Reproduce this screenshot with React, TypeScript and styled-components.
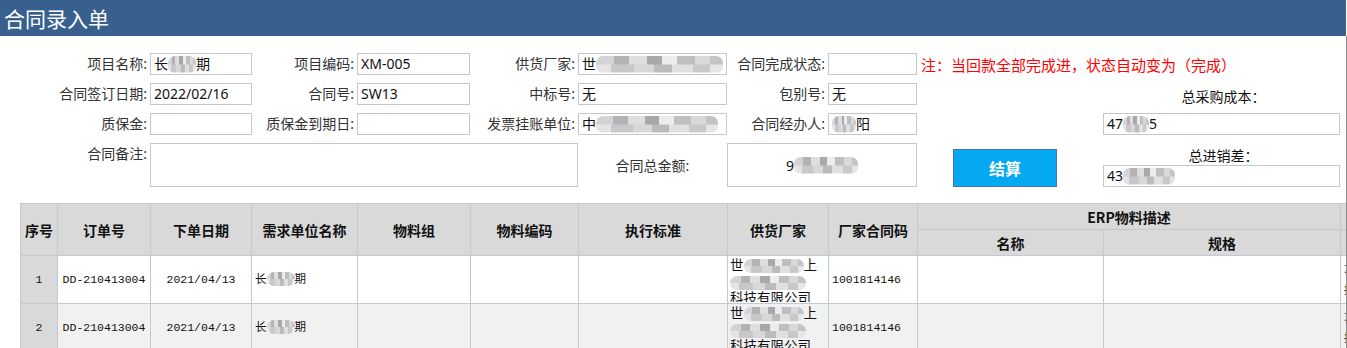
import * as React from 'react'
import styled, { createGlobalStyle } from 'styled-components'

const GlobalStyle = createGlobalStyle`
  html, body {
    margin: 0;
    padding: 0;
    background: #ffffff;
  }
  body {
    font-family: "Noto Sans", "Noto Sans CJK SC", sans-serif;
  }
`

type Row = {
  no: number
  order: string
  date: string
}

const rows: Row[] = [
  { no: 1, order: 'DD-210413004', date: '2021/04/13' },
  { no: 2, order: 'DD-210413004', date: '2021/04/13' },
]

const colWidths = [37, 93, 101, 106, 113, 108, 149, 101, 89, 186, 237, 120, 120]

export default function App() {
  return (
    <Shell>
      <GlobalStyle />
      <TitleBar>
        <Title>合同录入单</Title>
      </TitleBar>
      <Body>
        <FormGrid>
          <Label>项目名称:</Label>
          <Field>
            长<Mosaic $w={28} />期
          </Field>
          <Label>项目编码:</Label>
          <Field>XM-005</Field>
          <Label>供货厂家:</Label>
          <Field>
            世<Mosaic $w={128} />
          </Field>
          <Label>合同完成状态:</Label>
          <Field />
          <Note>注：当回款全部完成进，状态自动变为（完成）</Note>

          <Label>合同签订日期:</Label>
          <Field>2022/02/16</Field>
          <Label>合同号:</Label>
          <Field>SW13</Field>
          <Label>中标号:</Label>
          <Field>无</Field>
          <Label>包别号:</Label>
          <Field>无</Field>
          <Spacer />
          <SideLabel>总采购成本：</SideLabel>

          <Label>质保金:</Label>
          <Field />
          <Label>质保金到期日:</Label>
          <Field />
          <Label>发票挂账单位:</Label>
          <Field>
            中<Mosaic $w={122} />
          </Field>
          <Label>合同经办人:</Label>
          <Field>
            <Mosaic $w={24} />阳
          </Field>
          <Spacer />
          <Field>
            47<Mosaic $w={26} />5
          </Field>

          <Label>合同备注:</Label>
          <Memo />
          <CenterLabel>合同总金额:</CenterLabel>
          <AmountBox>
            9<Mosaic $w={64} />
          </AmountBox>
          <ButtonCell>
            <SettleButton>结算</SettleButton>
          </ButtonCell>
          <SideStack>
            <SideLabel>总进销差：</SideLabel>
            <Field>
              43<Mosaic $w={52} />
            </Field>
          </SideStack>
        </FormGrid>

        <TableWrap>
          <Table>
            <colgroup>
              {colWidths.map((w, i) => (
                <col key={i} style={{ width: w }} />
              ))}
            </colgroup>
            <thead>
              <tr>
                <Th rowSpan={2}>序号</Th>
                <Th rowSpan={2}>订单号</Th>
                <Th rowSpan={2}>下单日期</Th>
                <Th rowSpan={2}>需求单位名称</Th>
                <Th rowSpan={2}>物料组</Th>
                <Th rowSpan={2}>物料编码</Th>
                <Th rowSpan={2}>执行标准</Th>
                <Th rowSpan={2}>供货厂家</Th>
                <Th rowSpan={2}>厂家合同码</Th>
                <Th colSpan={2}>ERP物料描述</Th>
                <Th colSpan={2}>&nbsp;</Th>
              </tr>
              <tr>
                <Th>名称</Th>
                <Th>规格</Th>
                <Th>&nbsp;</Th>
                <Th>&nbsp;</Th>
              </tr>
            </thead>
            <tbody>
              {rows.map((r) => (
                <Tr key={r.no} $alt={r.no % 2 === 0}>
                  <IndexTd>{r.no}</IndexTd>
                  <Td $center>{r.order}</Td>
                  <Td $center>{r.date}</Td>
                  <Td>
                    长<Mosaic $w={28} $h={14} />期
                  </Td>
                  <Td />
                  <Td />
                  <Td />
                  <SupplierTd>
                    <SupplierText>
                      世<Mosaic $w={60} $h={14} />上
                      <br />
                      <Mosaic $w={76} $h={14} />
                      <br />
                      科技有限公司
                    </SupplierText>
                  </SupplierTd>
                  <Td>1001814146</Td>
                  <Td />
                  <Td />
                  <Td>
                    大
                    <br />
                    捷
                  </Td>
                  <Td />
                </Tr>
              ))}
            </tbody>
          </Table>
        </TableWrap>
      </Body>
    </Shell>
  )
}

const Shell = styled.div`
  width: 1347px;
  height: 348px;
  overflow: hidden;
`

const TitleBar = styled.header`
  width: 1346px;
  height: 36px;
  background-color: #37608f;
  display: flex;
  align-items: center;
`

const Title = styled.h1`
  margin: 0 0 0 4px;
  font-family: "Noto Sans CJK SC", sans-serif;
  font-weight: 400;
  font-size: 21px;
  line-height: 1;
  color: #ffffff;
`

const Body = styled.main`
  box-sizing: border-box;
  width: 1347px;
  height: 312px;
  border-right: 1px solid #8c8c8c;
  overflow: hidden;
`

const FormGrid = styled.section`
  display: grid;
  grid-template-columns: 150px 102px 105px 113px 108px 149px 101px 89px 186px 237px;
  grid-template-rows: 22px 22px 22px 44px;
  row-gap: 8px;
  padding-top: 17px;
  font-family: "Noto Sans", "Noto Sans CJK SC", sans-serif;
  font-size: 14px;
`

const Label = styled.label`
  display: flex;
  align-items: center;
  justify-content: flex-end;
  padding-right: 3px;
  color: #333333;
  white-space: nowrap;
  line-height: 1;
  align-self: start;
  height: 22px;
`

const CenterLabel = styled.span`
  display: flex;
  align-items: center;
  justify-content: center;
  color: #333333;
  white-space: nowrap;
`

const Field = styled.div`
  box-sizing: border-box;
  height: 22px;
  border: 1px solid #c4c7cb;
  background: #ffffff;
  padding: 0 3px;
  display: flex;
  align-items: center;
  color: #111111;
  white-space: nowrap;
  overflow: hidden;
  line-height: 1;
`

const Memo = styled.div`
  grid-column: span 4;
  border: 1px solid #c4c7cb;
  box-sizing: border-box;
`

const AmountBox = styled.div`
  grid-column: span 2;
  box-sizing: border-box;
  border: 1px solid #c4c7cb;
  display: flex;
  align-items: center;
  justify-content: center;
  color: #111111;
`

const Note = styled.span`
  grid-column: span 2;
  display: flex;
  align-items: center;
  padding-left: 4px;
  color: #ff0000;
  font-family: "Noto Sans CJK SC", sans-serif;
  font-size: 15px;
  white-space: nowrap;
  line-height: 1;
`

const Spacer = styled.span``

const SideLabel = styled.span`
  display: flex;
  align-items: flex-end;
  justify-content: center;
  padding-left: 4px;
  color: #111111;
  font-family: "Noto Sans CJK SC", sans-serif;
  white-space: nowrap;
  line-height: 1;
  padding-bottom: 2px;
`

const SideStack = styled.div`
  display: flex;
  flex-direction: column;
  justify-content: flex-end;
  gap: 1px;
`

const ButtonCell = styled.div`
  display: flex;
  align-items: flex-end;
  padding-left: 36px;
`

const SettleButton = styled.button`
  box-sizing: border-box;
  width: 104px;
  height: 38px;
  border: 1px solid #4a6fc4;
  background-color: #04a9f1;
  color: #ffffff;
  font-family: "Noto Sans CJK SC", sans-serif;
  font-weight: 700;
  font-size: 16px;
  padding: 0;
  cursor: pointer;
`

const Mosaic = styled.span<{ $w: number; $h?: number }>`
  display: inline-block;
  width: ${(p) => p.$w}px;
  height: ${(p) => p.$h ?? 17}px;
  vertical-align: middle;
  border-radius: 7px;
  background:
    linear-gradient(90deg, #d4d4d7 0 14%, #b4b2b5 14% 26%, #dedee0 26% 40%, #a8a7aa 40% 52%, #ececee 52% 64%, #bfbec1 64% 78%, #d9d9db 78% 90%, #c4c4c7 90%) top / 100% 50% no-repeat,
    linear-gradient(90deg, #e4e4e6 0 12%, #c8c8ca 12% 30%, #d8d8da 30% 46%, #bbbbbe 46% 60%, #e0e0e2 60% 76%, #c9c9cc 76% 90%, #e6e6e8 90%) bottom / 100% 50% no-repeat;
`

const TableWrap = styled.section`
  margin-top: 16px;
  padding-left: 20px;
`

const Table = styled.table`
  border-collapse: collapse;
  table-layout: fixed;
  width: ${colWidths.reduce((a, b) => a + b, 0)}px;
`

const Th = styled.th`
  height: 25px;
  padding: 0 2px;
  background-color: #d9d9d9;
  border: 1px solid #c3c9cf;
  font-family: "Noto Sans CJK SC", sans-serif;
  font-weight: 700;
  font-size: 14px;
  color: #111111;
  white-space: nowrap;
  overflow: hidden;
  line-height: 1;
`

const Tr = styled.tr<{ $alt: boolean }>`
  background-color: ${(p) => (p.$alt ? '#f1f1f1' : '#ffffff')};
`

const Td = styled.td<{ $center?: boolean }>`
  height: 47px;
  padding: 0 3px;
  border: 1px solid #c3c9cf;
  text-align: ${(p) => (p.$center ? 'center' : 'left')};
  font-family: "Liberation Mono", "Noto Sans CJK SC", monospace;
  font-size: 11.5px;
  color: #111111;
  white-space: nowrap;
  overflow: hidden;
  line-height: 22px;
`

const IndexTd = styled(Td)`
  background-color: #d9d9d9;
  text-align: center;
`

const SupplierTd = styled(Td)`
  padding: 0 2px;
  vertical-align: top;
`

const SupplierText = styled.div`
  height: 46px;
  font-family: "Noto Sans CJK SC", sans-serif;
  font-size: 13.5px;
  line-height: 15px;
  padding-top: 1px;
  box-sizing: border-box;
  overflow: hidden;
`
